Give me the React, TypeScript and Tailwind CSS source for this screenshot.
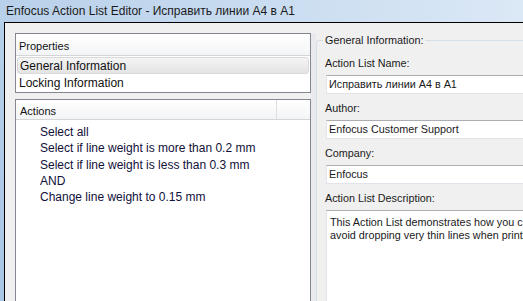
import React from 'react'

const ACTIONS = [
  'Select all',
  'Select if line weight is more than 0.2 mm',
  'Select if line weight is less than 0.3 mm',
  'AND',
  'Change line weight to 0.15 mm',
]

const FIELDS = [
  { label: 'Action List Name:', value: 'Исправить линии A4 в A1' },
  { label: 'Author:', value: 'Enfocus Customer Support' },
  { label: 'Company:', value: 'Enfocus' },
]

export default function App() {
  return (
    <div className="w-[523px] h-[301px] overflow-hidden flex flex-col bg-gradient-to-r from-[#b8d0ea] via-[#c9dcf0] to-[#dbe8f6] font-['Liberation_Sans',sans-serif] text-[12px] text-[#111]">
      {/* Title bar */}
      <div className="h-[22px] shrink-0 flex items-center pl-[6px] text-[12px] text-[#1b1b1b]">
        Enfocus Action List Editor - Исправить линии A4 в A1
      </div>

      <div className="flex flex-1 min-h-0">
        {/* Window frame */}
        <div className="w-[4px] shrink-0 bg-gradient-to-b from-[#b6cfea] to-[#a9c6e6]" />

        {/* Client area */}
        <div className="flex-1 min-w-0 flex border-l border-t border-black bg-[#f0f0f0] pl-[10px] pt-[10px]">
          {/* Left column */}
          <div className="w-[296px] shrink-0 flex flex-col gap-[6px]">
            <div className="h-[60px] border border-[#828790] bg-white flex flex-col">
              <div className="h-[22px] flex items-center pt-[3px] pl-[3px] border-b border-[#d5d5d5] bg-gradient-to-b from-white to-[#f3f4f6] text-[11px]">
                Properties
              </div>
              <div className="mt-px mx-px h-[17px] flex items-center pl-[2px] rounded-[3px] border border-[#d9d9d9] bg-gradient-to-b from-[#f4f4f4] to-[#e4e4e4]">
                General Information
              </div>
              <div className="h-[17px] flex items-center pl-[3px]">Locking Information</div>
            </div>

            <div className="flex-1 border border-b-0 border-[#828790] bg-white flex flex-col">
              <div className="h-[20px] flex border-b border-[#d5d5d5] bg-gradient-to-b from-white to-[#f3f4f6] text-[11px]">
                <div className="w-[261px] flex items-center pt-[3px] pl-[4px] border-r border-[#dedede]">Actions</div>
              </div>
              <div className="flex flex-col pl-[24px] pt-[4px]">
                {ACTIONS.map(a => (
                  <div key={a} className="h-[16.3px] leading-[16px] text-[#10103a]">{a}</div>
                ))}
              </div>
            </div>
          </div>

          {/* Splitter */}
          <div className="w-[5px] shrink-0 bg-[#e8eaee]" />

          {/* General information group */}
          <div className="shrink-0 w-[260px] mt-[7px] relative border border-r-0 border-b-0 border-[#d5dfe5] rounded-tl-[3px] pl-[9px] pt-[14px] text-[10.8px] text-[#1a1a1a]">
            <span className="absolute -top-[8px] left-[6px] px-[2px] bg-[#f0f0f0] leading-[14px]">General Information:</span>
            {FIELDS.map(f => (
              <div key={f.label} className="flex flex-col">
                <div className="h-[16px] leading-[16px] -ml-px">{f.label}</div>
                <div className="mt-[4px] h-[19px] flex items-center pl-[2px] bg-white border border-[#e2e3ea] border-t-[#abadb3] whitespace-nowrap">
                  {f.value}
                </div>
                <div className="h-[6px]" />
              </div>
            ))}
            <div className="h-[16px] leading-[16px] -ml-px">Action List Description:</div>
            <div className="mt-[4px] h-[100px] bg-white border border-[#e2e3ea] border-t-[#abadb3] pl-[3px] pt-[5px] leading-[13px] whitespace-nowrap">
              <div>This Action List demonstrates how you can</div>
              <div>avoid dropping very thin lines when printing.</div>
            </div>
          </div>
        </div>
      </div>
    </div>
  )
}
